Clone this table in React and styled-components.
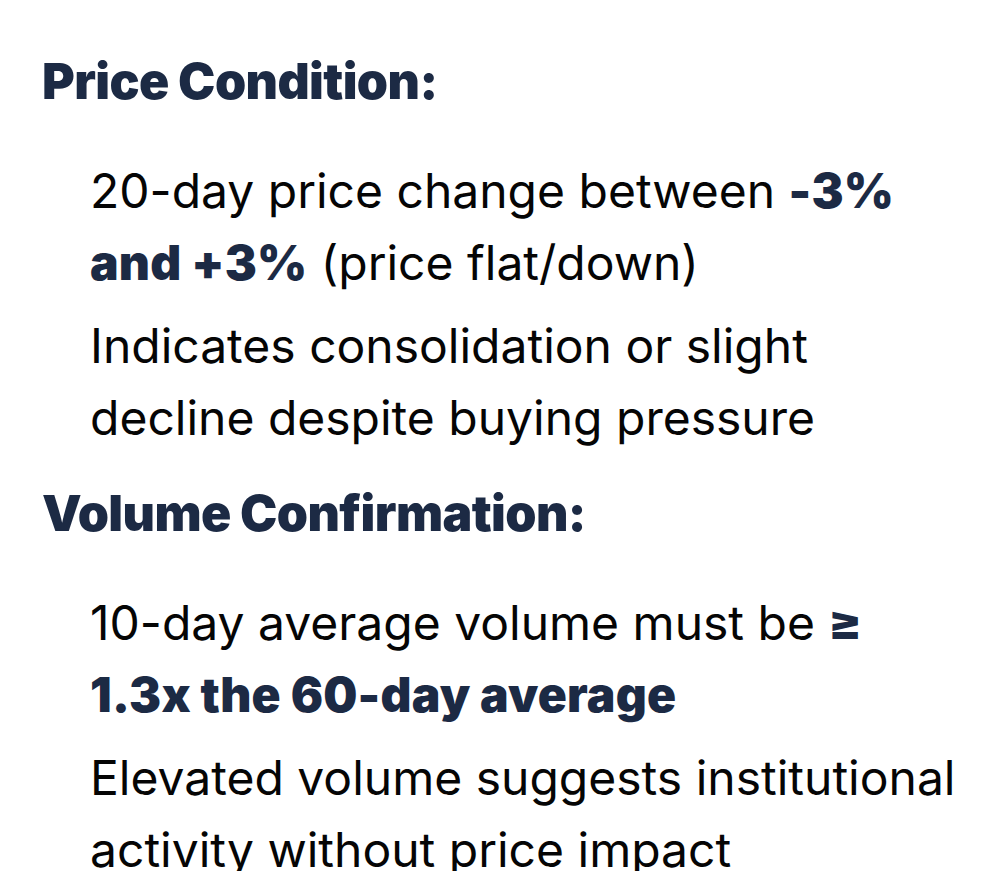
import styled, { createGlobalStyle } from 'styled-components';

const GlobalStyle = createGlobalStyle`
  html, body {
    margin: 0;
    padding: 0;
    background: #ffffff;
  }
  body {
    font-family: 'Inter', 'Noto Sans', sans-serif;
    -webkit-font-smoothing: antialiased;
  }
`;

const Page = styled.div`
  padding: 45px 33px 0 42px;
  width: 995px;
  box-sizing: border-box;
  overflow: hidden;
  height: 871px;
`;

const Heading = styled.h3`
  margin: ${({ $first }) => ($first ? '0' : '23px')} 0 38px;
  font-size: 50px;
  line-height: 72px;
  font-weight: 900;
  color: #1c2a44;
  letter-spacing: -0.6px;
`;

const List = styled.ul`
  list-style: none;
  margin: 0;
  padding: 0 0 0 48px;
`;

const Item = styled.li`
  font-size: 48px;
  line-height: 72px;
  color: #050505;

  & + & {
    margin-top: 11px;
  }
`;

const Strong = styled.strong`
  font-weight: 900;
  color: #1c2a44;
  letter-spacing: 0.2px;
`;

const sections = [
  {
    title: 'Price Condition:',
    items: [
      <>
        20-day price change between <Strong>-3% and +3%</Strong> (price flat/down)
      </>,
      'Indicates consolidation or slight decline despite buying pressure',
    ],
  },
  {
    title: 'Volume Confirmation:',
    items: [
      <>
        10-day average volume must be <Strong>≥ 1.3x the 60-day average</Strong>
      </>,
      'Elevated volume suggests institutional activity without price impact',
    ],
  },
];

function App() {
  return (
    <>
      <GlobalStyle />
      <Page>
        {sections.map((section, i) => (
          <section key={section.title}>
            <Heading $first={i === 0}>{section.title}</Heading>
            <List>
              {section.items.map((item, j) => (
                <Item key={j}>{item}</Item>
              ))}
            </List>
          </section>
        ))}
      </Page>
    </>
  );
}

export default App;
